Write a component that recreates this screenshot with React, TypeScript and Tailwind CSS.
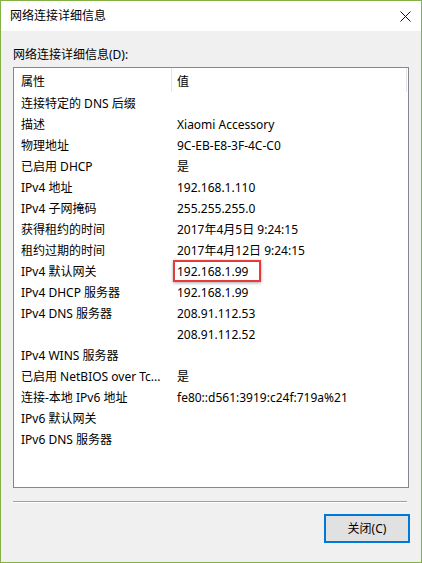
const rows: [string, string][] = [
  ['连接特定的 DNS 后缀', ''],
  ['描述', 'Xiaomi Accessory'],
  ['物理地址', '9C-EB-E8-3F-4C-C0'],
  ['已启用 DHCP', '是'],
  ['IPv4 地址', '192.168.1.110'],
  ['IPv4 子网掩码', '255.255.255.0'],
  ['获得租约的时间', '2017年4月5日 9:24:15'],
  ['租约过期的时间', '2017年4月12日 9:24:15'],
  ['IPv4 默认网关', '192.168.1.99'],
  ['IPv4 DHCP 服务器', '192.168.1.99'],
  ['IPv4 DNS 服务器', '208.91.112.53'],
  ['', '208.91.112.52'],
  ['IPv4 WINS 服务器', ''],
  ['已启用 NetBIOS over Tc...', '是'],
  ['连接-本地 IPv6 地址', 'fe80::d561:3919:c24f:719a%21'],
  ['IPv6 默认网关', ''],
  ['IPv6 DNS 服务器', ''],
];

export default function App() {
  return (
    <div
      className="w-[422px] h-[563px] border border-[#83b145] bg-[#f0f0f0] flex flex-col text-[12px] text-black"
      style={{ fontFamily: '"Noto Sans", "Noto Sans CJK SC", sans-serif' }}
    >
      {/* title bar */}
      <div className="h-[30px] bg-white flex items-center justify-between pl-[9px] pr-[10px]">
        <span className="leading-[16px]">网络连接详细信息</span>
        <svg width="11" height="11" viewBox="0 0 11 11" className="mt-[1px]">
          <path d="M0.5 0.5 L10.5 10.5 M10.5 0.5 L0.5 10.5" stroke="#111" strokeWidth="1" />
        </svg>
      </div>

      <div className="flex flex-col pl-[12px] pr-[11px] pt-[16px]">
        <div className="leading-[16px] mb-[4px]">网络连接详细信息(D):</div>

        {/* list view */}
        <div className="w-[396px] h-[421px] border border-[#828790] bg-white">
          <div className="flex h-[24px] items-start">
            <div className="w-[157px] pl-[7px] pt-[6px] leading-[16px]">属性</div>
            <div className="w-px h-[24px] bg-[#e5e5e5]" />
            <div className="flex-1 pl-[5px] pt-[6px] leading-[16px]">值</div>
            <div className="w-px h-[24px] bg-[#e5e5e5] mr-[1px]" />
          </div>
          {rows.map(([name, value], i) => (
            <div key={i} className="flex h-[21px] items-start">
              <div className="w-[157px] pl-[7px] pt-[4px] whitespace-nowrap overflow-hidden leading-[16px]">{name}</div>
              <div className="relative flex-1 h-[21px] pl-[6px] pt-[4px] whitespace-nowrap leading-[16px]">
                {value}
                {i === 8 && (
                  <div className="absolute left-[2px] top-0 w-[88px] h-[22px] border-2 border-[#e63b3b] shadow-[0_1px_3px_rgba(0,0,0,0.35)]" />
                )}
              </div>
            </div>
          ))}
        </div>

        {/* separator */}
        <div className="mt-[13px] w-[394px] h-px bg-[#a0a0a0]" />
        <div className="w-[394px] h-px bg-white" />

        <div className="flex justify-end mt-[11px]">
          <button className="w-[86px] h-[29px] border-2 border-[#0078d7] bg-[#e1e1e1] leading-[16px] flex items-center justify-center">
            关闭(C)
          </button>
        </div>
      </div>
    </div>
  );
}
